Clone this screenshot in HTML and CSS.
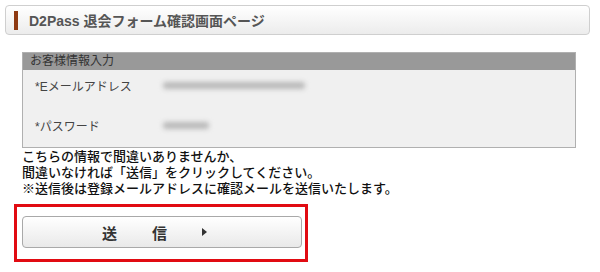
FILE: index.html
```html
<!doctype html>
<html lang="ja">
  <head>
    <meta charset="UTF-8" />
    <title>D2Pass 退会フォーム確認画面ページ</title>
    <link rel="stylesheet" href="styles.css">
  </head>
  <body>
    <h1 class="page-title"><span class="title-mark"></span>D2Pass 退会フォーム確認画面ページ</h1>

    <div class="content">
      <div class="info">
        <div class="info-head">お客様情報入力</div>
        <div class="info-rows">
          <div class="info-row">
            <span class="info-label">*Eメールアドレス</span>
            <span class="info-value blur-email"></span>
          </div>
          <div class="info-row">
            <span class="info-label">*パスワード</span>
            <span class="info-value blur-pass"></span>
          </div>
        </div>
      </div>

      <p class="notice">
        こちらの情報で間違いありませんか、<br />
        間違いなければ「送信」をクリックしてください。<br />
        ※送信後は登録メールアドレスに確認メールを送信いたします。
      </p>
    </div>

    <div class="submit-frame">
      <button class="submit" type="button">
        <span>送</span><span>信</span><span class="arrow"></span>
      </button>
    </div>
  </body>
</html>
```

FILE: styles.css
```css
html {
  margin: 0;
  padding: 0;
}
body {
  margin: 0;
  padding: 5px 0 0 0;
  background: #ffffff;
  color: #111111;
  font-family: 'Liberation Sans', 'Noto Sans CJK JP', sans-serif;
}
.page-title {
  display: flex;
  align-items: center;
  box-sizing: border-box;
  margin: 0 10px 0 5px;
  height: 30px;
  padding-left: 8px;
  border: 1px solid #cfcfcf;
  border-radius: 4px;
  background-image: linear-gradient(#ffffff, #ececec);
  font-size: 14px;
  font-weight: bold;
  color: #555555;
}
.title-mark {
  width: 4px;
  height: 19px;
  margin-right: 11px;
  background: #8e3a12;
}
.content {
  margin: 17px 0 0 22px;
}
.info {
  width: 554px;
  box-sizing: border-box;
  border: 1px solid #b0b0b0;
  background: #f0f0f0;
}
.info-head {
  height: 17px;
  line-height: 17px;
  padding-left: 7px;
  background: #999999;
  font-size: 12px;
  color: #333333;
}
.info-rows {
  display: flex;
  flex-direction: column;
  padding: 0 0 1px 12px;
  height: 77px;
  box-sizing: border-box;
}
.info-row {
  display: flex;
  align-items: center;
  height: 40px;
  flex-shrink: 0;
  font-size: 12px;
  color: #444444;
}
.info-row:first-child {
  margin-top: -5px;
}
.info-label {
  width: 128px;
}
.info-value {
  height: 7px;
  background: #b8b8b8;
  filter: blur(2.5px);
  border-radius: 3px;
}
.blur-email {
  width: 142px;
}
.blur-pass {
  width: 46px;
}
.notice {
  margin: 0;
  font-family: 'Noto Sans CJK JP', sans-serif;
  font-size: 13px;
  line-height: 16px;
  font-weight: 500;
  color: #111111;
}
.submit-frame {
  width: 294px;
  box-sizing: border-box;
  margin: 8px 0 0 14px;
  padding: 9px 3px 11px 5px;
  border: 3px solid #e10b12;
}
.submit {
  display: flex;
  align-items: center;
  justify-content: center;
  gap: 35px;
  width: 280px;
  height: 32px;
  padding: 0 15px 0 0;
  border: 1px solid #a9a9a9;
  border-radius: 4px;
  background-image: linear-gradient(#ffffff, #e9e9e9);
  font-family: 'Noto Sans CJK JP', sans-serif;
  font-size: 15px;
  font-weight: bold;
  color: #333333;
  cursor: pointer;
}
.arrow {
  width: 0;
  height: 0;
  border-top: 4px solid transparent;
  border-bottom: 4px solid transparent;
  border-left: 5px solid #333333;
}
```
